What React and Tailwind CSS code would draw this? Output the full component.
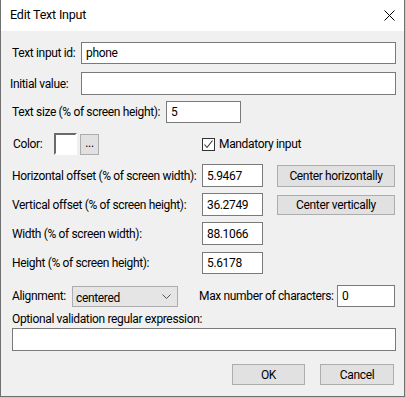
import React from "react";

const font = { fontFamily: 'Roboto, "Noto Sans", sans-serif' };

function Input({ className = "", value = "" }) {
  return (
    <div className={`shrink-0 bg-white border border-[#7a7a7a] flex items-center pl-[4px] text-[12px] text-black ${className}`}>
      {value}
    </div>
  );
}

function Button({ className = "", children }) {
  return (
    <div className={`shrink-0 bg-[#e1e1e1] border border-[#adadad] flex items-center justify-center text-[12px] text-black whitespace-nowrap ${className}`}>
      {children}
    </div>
  );
}

function Label({ className = "", children }) {
  return <span className={`shrink-0 whitespace-nowrap ${className}`}>{children}</span>;
}

export default function App() {
  return (
    <div className="w-[406px] h-[398px] bg-[#c8c8c8] text-black tracking-[-0.35px]" style={font}>
      <div className="w-[405px] h-[397px] border-l border-r border-b border-[#707070] flex flex-col bg-[#f0f0f0]">
        <div className="h-[31px] bg-white flex items-center justify-between pl-[9px] pr-[9px] shrink-0">
          <span className="text-[12.5px] leading-none tracking-[-0.2px]">Edit Text Input</span>
          <svg width="11" height="11" viewBox="0 0 11 11">
            <path d="M0.5 0.5 L10.5 10.5 M10.5 0.5 L0.5 10.5" stroke="#000" strokeWidth="1" />
          </svg>
        </div>

        <div className="flex flex-col text-[12px]">
          <div className="h-[22px] mt-[11px] flex items-center pl-[11px]">
            <Label className="w-[69px]">Text input id:</Label>
            <Input className="w-[315px] h-[22px]" value="phone" />
          </div>
          <div className="h-[23px] mt-[8px] flex items-center pl-[9px]">
            <Label className="w-[71px]">Initial value:</Label>
            <Input className="w-[315px] h-[23px]" />
          </div>
          <div className="h-[22px] mt-[6px] flex items-center pl-[11px]">
            <Label className="w-[154px]">Text size (% of screen height):</Label>
            <Input className="w-[75px] h-[22px]" value="5" />
          </div>
          <div className="h-[22px] mt-[10px] flex items-center pl-[12px]">
            <Label className="w-[41px]">Color:</Label>
            <div className="shrink-0 w-[23px] h-[22px] bg-white border-t-2 border-l-2 border-[#6a6a6a] border-b-2 border-r-2 border-b-white border-r-white"></div>
            <Button className="w-[19px] h-[21px] ml-[3px] pb-[3px]">...</Button>
            <div className="shrink-0 ml-[103px] w-[13px] h-[13px] bg-white border border-[#333] flex items-center justify-center">
              <svg width="11" height="11" viewBox="0 0 11 11">
                <path d="M1.5 5.5 L4 8.5 L9.5 1.5" stroke="#333" strokeWidth="1.1" fill="none" />
              </svg>
            </div>
            <Label className="ml-[4px]">Mandatory input</Label>
          </div>
          <div className="h-[23px] mt-[9px] flex items-center pl-[11px]">
            <Label className="w-[190px]">Horizontal offset (% of screen width):</Label>
            <Input className="w-[61px] h-[23px]" value="5.9467" />
            <Button className="w-[118px] h-[22px] ml-[14px]">Center horizontally</Button>
          </div>
          <div className="h-[23px] mt-[6px] flex items-center pl-[11px]">
            <Label className="w-[190px]">Vertical offset (% of screen height):</Label>
            <Input className="w-[61px] h-[23px]" value="36.2749" />
            <Button className="w-[118px] h-[20px] ml-[14px]">Center vertically</Button>
          </div>
          <div className="h-[23px] mt-[6px] flex items-center pl-[11px]">
            <Label className="w-[190px]">Width (% of screen width):</Label>
            <Input className="w-[61px] h-[23px]" value="88.1066" />
          </div>
          <div className="h-[22px] mt-[7px] flex items-center pl-[11px]">
            <Label className="w-[190px]">Height (% of screen height):</Label>
            <Input className="w-[61px] h-[22px]" value="5.6178" />
          </div>
          <div className="h-[22px] mt-[11px] flex items-center pl-[11px]">
            <Label className="w-[60px]">Alignment:</Label>
            <div className="shrink-0 w-[106px] h-[21px] bg-[#e5e5e5] border border-[#adadad] flex items-center justify-between pl-[3px] pr-[6px] mt-[1px]">
              <span className="pt-[2px]">centered</span>
              <svg width="9" height="6" viewBox="0 0 9 6">
                <path d="M0.5 0.5 L4.5 4.5 L8.5 0.5" stroke="#555" strokeWidth="1" fill="none" />
              </svg>
            </div>
            <Label className="ml-[21px] w-[138px]">Max number of characters:</Label>
            <Input className="w-[58px] h-[22px]" value="0" />
          </div>
          <div className="h-[14px] mt-[5px] flex items-center pl-[11px]">
            <Label>Optional validation regular expression:</Label>
          </div>
          <div className="h-[23px] mt-[2px] flex items-center pl-[11px]">
            <Input className="w-[384px] h-[23px]" />
          </div>
          <div className="h-[21px] mt-[13px] flex items-center pl-[231px]">
            <Button className="w-[73px] h-[21px]">OK</Button>
            <Button className="w-[74px] h-[21px] ml-[15px]">Cancel</Button>
          </div>
        </div>
      </div>
    </div>
  );
}
